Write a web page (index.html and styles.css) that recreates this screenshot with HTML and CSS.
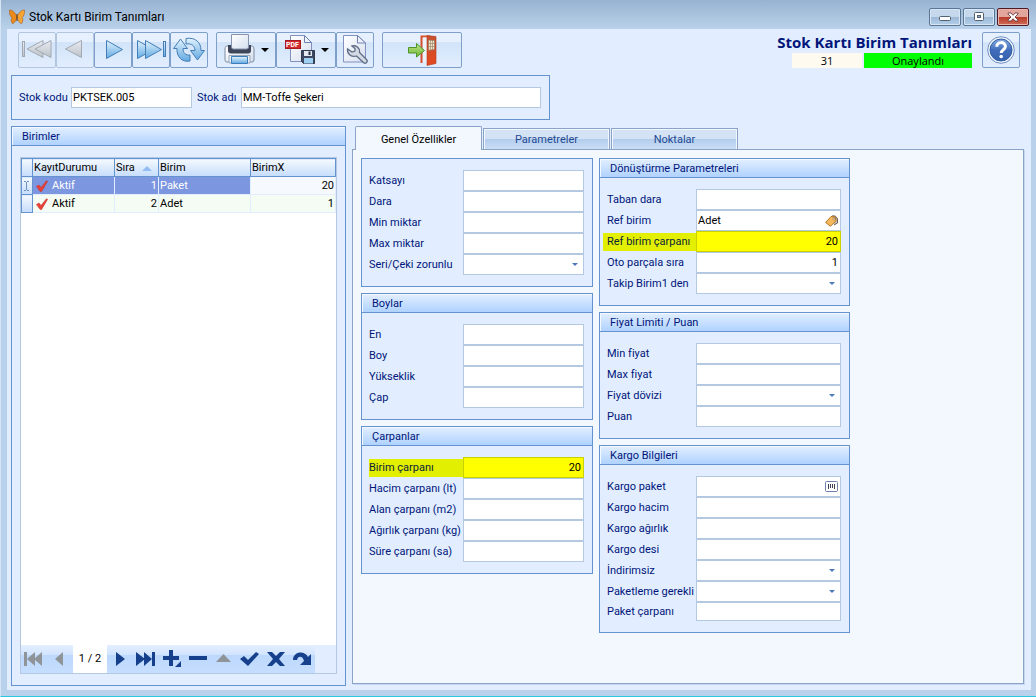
FILE: index.html
```html
<!DOCTYPE html>
<html lang="tr">
<head>
<meta charset="utf-8">
<title>Stok Kartı Birim Tanımları</title>
<link rel="stylesheet" href="styles.css">
</head>
<body>
<svg class="defs" width="0" height="0" aria-hidden="true">
  <defs>
    <linearGradient id="gBlue" x1="0" y1="0" x2="0" y2="1"><stop offset="0" stop-color="#e2f3fd"/><stop offset="1" stop-color="#62a9e2"/></linearGradient>
    <linearGradient id="gGray" x1="0" y1="0" x2="0" y2="1"><stop offset="0" stop-color="#e9edf2"/><stop offset="1" stop-color="#bcc1c8"/></linearGradient>
    <linearGradient id="gPaper" x1="0" y1="0" x2="1" y2="1"><stop offset="0" stop-color="#ffffff"/><stop offset="1" stop-color="#d5dfee"/></linearGradient>
    <linearGradient id="gDoor" x1="0" y1="0" x2="0" y2="1"><stop offset="0" stop-color="#c8502c"/><stop offset="1" stop-color="#e4481f"/></linearGradient>
    <linearGradient id="gHelp" x1="0" y1="0" x2="0" y2="1"><stop offset="0" stop-color="#8aaede"/><stop offset=".5" stop-color="#3f6dbb"/><stop offset="1" stop-color="#3562ae"/></linearGradient>
    <linearGradient id="gGreen" x1="0" y1="0" x2="0" y2="1"><stop offset="0" stop-color="#bfe584"/><stop offset="1" stop-color="#6cb539"/></linearGradient>
  </defs>
</svg>
<div class="window">
  <header class="titlebar">
    <svg class="app-icon" viewBox="0 0 16 16" aria-hidden="true">
      <path d="M7.600 7C5.400 2.400 2.600.6.4 1.200c-.2 3 .6 6 2.400 7.200C1.600 10 2 12.800 3.600 14.800 5.800 14 7.400 11 7.800 8.200z" fill="#ee8a1a" stroke="#8d531a" stroke-width=".5"/>
      <path d="M8.400 7C10.600 2.400 13.400.6 15.600 1.200c.2 3-.6 6-2.400 7.200 1.200 1.600.8 4.400-.8 6.400-2.200-.8-3.800-3.800-4.200-6.600z" fill="#f7a433" stroke="#8d531a" stroke-width=".5"/>
      <path d="M8 5v7" stroke="#5b3413"/>
    </svg>
    <span class="titlebar-text">Stok Kartı Birim Tanımları</span>
    <div class="win-buttons">
      <button class="win-btn" aria-label="Simge durumuna küçült"><svg width="12" height="10" viewBox="0 0 12 10"><rect x=".5" y="4.500" width="11" height="4" rx="1" fill="#fff" stroke="#53606f"/></svg></button>
      <button class="win-btn" aria-label="Ekranı kapla"><svg width="12" height="10" viewBox="0 0 12 10"><rect x="1.500" y=".5" width="9" height="8" rx="1" fill="#fff" stroke="#53606f"/><rect x="4.500" y="3.500" width="3" height="2" fill="#8fabc8" stroke="#53606f"/></svg></button>
      <button class="win-btn win-close" aria-label="Kapat"><svg width="12" height="10" viewBox="0 0 12 10"><path d="M1 1h3l2 2.300L8 1h3v1L8 5l3 3v1H8L6 6.700 4 9H1V8l3-3-3-3z" fill="#fff" stroke="#5c3034" stroke-width=".8"/></svg></button>
    </div>
  </header>

  <main class="client">
    <div class="toolbar">
      <div class="tool-group">
        <button class="tool" disabled aria-label="İlk"><svg viewBox="0 0 32 32"><g fill="url(#gGray)" stroke="#a3a9b2"><rect x="1.500" y="7.500" width="2" height="15"/><path d="M22 6.500v17L6 15z"/><path d="M30 6.500v17L14 15z"/></g></svg></button>
        <button class="tool" disabled aria-label="Önceki"><svg viewBox="0 0 32 32"><path d="M22.500 6.500v17L6.500 15z" fill="url(#gGray)" stroke="#a3a9b2"/></svg></button>
        <button class="tool" aria-label="Sonraki"><svg viewBox="0 0 32 32"><path d="M9.500 6.500v18l16-9z" fill="url(#gBlue)" stroke="#447db5"/></svg></button>
        <button class="tool" aria-label="Son"><svg viewBox="0 0 32 32"><g fill="url(#gBlue)" stroke="#447db5"><path d="M2.500 6.500v18l16-9z"/><path d="M10.500 6.500v18l16-9z"/><rect x="28.500" y="7.500" width="2" height="15"/></g></svg></button>
        <button class="tool" aria-label="Yenile"><svg viewBox="0 0 32 32"><g fill="url(#gBlue)" stroke="#447db5"><path d="M17 21v6C9 28.500 3.500 23 4 14.500H.5L7.500 5l7 9.500H10c0 4.500 2.500 7 7 6.500z"/><path d="M13 10V4.500C22 3 28 8 28 16.500h3.500l-7 9.500-7-9.500H22c0-4.500-3.500-7.500-9-6.500z"/></g></svg></button>
      </div>
      <div class="tool-group">
        <button class="tool tool-split" aria-label="Yazdır"><svg viewBox="0 0 32 32"><path d="M2.500 12q-1.500 1-1.500 3v11q0 2 2 2h25q2 0 2-2V15q0-2-1.500-3z" fill="url(#gPaper)" stroke="#7d8ba3"/><path d="M4 16.500q0 3 3 3h17q3 0 3-3V11H4z" fill="#3c4559"/><path d="M7.500.5h17V13q0 2-2 2h-13q-2 0-2-2z" fill="url(#gPaper)" stroke="#8793aa"/><path d="M5 21.500h21v7.500H5z" fill="#edf2f9" stroke="#9aa7bb"/><path d="M7.500 22.500h16v7h-16z" fill="url(#gBlue)" stroke="#3d7db9"/></svg><i class="drop"></i></button>
        <button class="tool tool-split" aria-label="PDF kaydet"><svg viewBox="0 0 32 32"><path d="M6.500 1.500h14l7 7v19h-21z" fill="url(#gPaper)" stroke="#8290bd"/><path d="M20.500 1.500v7h7z" fill="#eef3fb" stroke="#6f80b2"/><rect x="1.500" y="6.500" width="15" height="8" fill="#d22b2d" stroke="#a51b20"/><text class="pdf-mark" x="2" y="13">PDF</text><path d="M17.500 16.500h13v13h-11l-2-2z" fill="#3e4860" stroke="#303a50"/><rect x="20" y="17" width="8" height="5" fill="#e5eaf1"/><rect x="24.500" y="17.500" width="2" height="3.500" fill="#28324a"/><rect x="20" y="24" width="9" height="5.500" fill="#9fd0f2"/></svg><i class="drop"></i></button>
        <button class="tool" aria-label="Ayarlar"><svg viewBox="0 0 32 32"><path d="M4.500 1.500h14l8 7.500v19h-22z" fill="url(#gPaper)" stroke="#8290bd"/><path d="M18.500 1.500V9h8z" fill="#eef3fb" stroke="#6f80b2"/><path d="M13 12c4-1 8 1.500 7.500 6.500l7 7c2 2-1 5-3 3L17.500 22C12.500 23.500 8 20 8.500 15l4.500 3 3-1 0-2.500z" fill="#d3dae4" stroke="#5f6e86" stroke-width="1.300"/></svg></button>
      </div>
      <button class="tool tool-exit" aria-label="Çıkış"><svg viewBox="0 0 32 32"><path d="M15.500 29V2.500H24" fill="none" stroke="#d8512e" stroke-width="2"/><path d="M17 3.500h5v24h-5z" fill="#eef3fa"/><path d="M21 1.500l9 1v27l-9 2z" fill="url(#gDoor)" stroke="#ae3c20" stroke-width=".6"/><path d="M22.500 6l6 .6v9l-6 .6z" fill="#f6e6c0" stroke="#8d7b6a" stroke-width=".7"/><path d="M24.500 6v10M26.500 6v10M22.500 9.500h6M22.500 12.500h6" stroke="#8d7b6a" stroke-width=".6"/><path d="M2.500 13.500h8v-4l8 7-8 6.500v-4h-8z" fill="url(#gGreen)" stroke="#4c9428"/></svg></button>
      <div class="heading">
        <h1>Stok Kartı Birim Tanımları</h1>
        <div class="status"><span class="status-no">31</span><span class="status-ok">Onaylandı</span></div>
      </div>
      <button class="tool" aria-label="Yardım"><svg viewBox="0 0 32 32"><circle cx="16" cy="16" r="13.300" fill="#f4f8fd" stroke="#6d8dc0"/><circle cx="16" cy="16" r="11" fill="url(#gHelp)" stroke="#2f5ca6"/><path d="M11.800 12.800c0-5.600 8.600-5.400 8.600-.4 0 3-4.200 3.400-4.200 6.600" fill="none" stroke="#fff" stroke-width="3"/><circle cx="16.200" cy="22.500" r="1.800" fill="#fff"/></svg></button>
    </div>

    <section class="card-bar">
      <label for="kod">Stok kodu</label><input id="kod" class="text code" value="PKTSEK.005">
      <label for="adi">Stok adı</label><input id="adi" class="text name" value="MM-Toffe Şekeri">
    </section>

    <div class="body">
      <section class="group units">
        <h2>Birimler</h2>
        <div class="grid">
          <table>
            <colgroup><col class="c-ind"><col class="c-state"><col class="c-order"><col class="c-unit"><col></colgroup>
            <thead><tr><th></th><th>KayıtDurumu</th><th>Sıra<i class="sort"></i></th><th>Birim</th><th>BirimX</th></tr></thead>
            <tbody>
              <tr class="selected"><th><svg width="7" height="10" viewBox="0 0 7 10"><path d="M1 .5h2M4 .5h2M3.500 1v8M1 9.500h2M4 9.500h2" stroke="#6d92c8" fill="none"/></svg></th>
                <td><span class="state"><svg class="tick" viewBox="0 0 12 12"><path d="M.5 6.500L3 5l2 2.500L10.500.8l1 .6L5.500 11.500 4 11.300z" fill="#e8423a" stroke="#c8302b" stroke-width=".6"/></svg>Aktif</span></td><td class="num">1</td><td>Paket</td><td class="num focus">20</td></tr>
              <tr><th></th>
                <td><span class="state"><svg class="tick" viewBox="0 0 12 12"><path d="M.5 6.500L3 5l2 2.500L10.500.8l1 .6L5.500 11.500 4 11.300z" fill="#e8423a" stroke="#c8302b" stroke-width=".6"/></svg>Aktif</span></td><td class="num">2</td><td>Adet</td><td class="num">1</td></tr>
            </tbody>
          </table>
          <nav class="navigator">
            <button class="nav-btn" disabled aria-label="İlk kayıt"><svg viewBox="0 0 26 28"><path d="M3 7h3v14H3zM14 7v14L6 14zM21 7v14l-8-7z"/></svg></button>
            <button class="nav-btn" disabled aria-label="Önceki kayıt"><svg viewBox="0 0 26 28"><path d="M16 7v14l-8-7z"/></svg></button>
            <span class="nav-pos">1 / 2</span>
            <button class="nav-btn" aria-label="Sonraki kayıt"><svg viewBox="0 0 26 28"><path d="M9 7v14l9-7z"/></svg></button>
            <button class="nav-btn" aria-label="Son kayıt"><svg viewBox="0 0 26 28"><path d="M3 7v14l9-7zM11 7v14l8-7zM19 7h3v14h-3z"/></svg></button>
            <button class="nav-btn" aria-label="Ekle"><svg viewBox="0 0 26 28"><path d="M10 5h4v6h6v4h-6v6h-4v-6H4v-4h6zM22 16v6h-6z"/></svg></button>
            <button class="nav-btn" aria-label="Sil"><svg viewBox="0 0 26 28"><path d="M4 11h18v4H4z"/></svg></button>
            <button class="nav-btn" disabled aria-label="Düzenle"><svg viewBox="0 0 26 28"><path d="M5 17l7.500-8 7.500 8z"/></svg></button>
            <button class="nav-btn" aria-label="Kaydet"><svg viewBox="0 0 26 28"><path d="M3 14l4-3 4 4 8-8 3 2-11 12z"/></svg></button>
            <button class="nav-btn" aria-label="Vazgeç"><svg viewBox="0 0 26 28"><path d="M4 7h5l4 4 4-4h5l-6 7 6 7h-5l-4-4-4 4H4l6-7z"/></svg></button>
            <button class="nav-btn" aria-label="Yenile"><svg viewBox="0 0 26 28"><path d="M4 15c0-9 12-10 15-3l3-3v11H11l4-4c-1-5-6-6-7-1z"/></svg></button>
          </nav>
        </div>
      </section>

      <section class="pages">
        <div class="tabs" role="tablist">
          <button class="tab active" role="tab" aria-selected="true">Genel Özellikler</button>
          <button class="tab" role="tab">Parametreler</button>
          <button class="tab" role="tab">Noktalar</button>
        </div>
        <div class="page" role="tabpanel">
          <div class="column column-a">
            <section class="group">
              <div class="fields">
                <div class="row"><label for="a1">Katsayı</label><input id="a1" class="text"></div>
                <div class="row"><label for="a2">Dara</label><input id="a2" class="text"></div>
                <div class="row"><label for="a3">Min miktar</label><input id="a3" class="text"></div>
                <div class="row"><label for="a4">Max miktar</label><input id="a4" class="text"></div>
                <div class="row pick"><label for="a5">Seri/Çeki zorunlu</label><select id="a5" class="text"><option></option></select></div>
              </div>
            </section>
            <section class="group">
              <h2>Boylar</h2>
              <div class="fields">
                <div class="row"><label for="b1">En</label><input id="b1" class="text"></div>
                <div class="row"><label for="b2">Boy</label><input id="b2" class="text"></div>
                <div class="row"><label for="b3">Yükseklik</label><input id="b3" class="text"></div>
                <div class="row"><label for="b4">Çap</label><input id="b4" class="text"></div>
              </div>
            </section>
            <section class="group">
              <h2>Çarpanlar</h2>
              <div class="fields">
                <div class="row marked"><label for="c1">Birim çarpanı</label><input id="c1" class="text num" value="20"></div>
                <div class="row"><label for="c2">Hacim çarpanı (lt)</label><input id="c2" class="text"></div>
                <div class="row"><label for="c3">Alan çarpanı (m2)</label><input id="c3" class="text"></div>
                <div class="row"><label for="c4">Ağırlık çarpanı (kg)</label><input id="c4" class="text"></div>
                <div class="row"><label for="c5">Süre çarpanı (sa)</label><input id="c5" class="text"></div>
              </div>
            </section>
          </div>
          <div class="column column-b">
            <section class="group">
              <h2>Dönüştürme Parametreleri</h2>
              <div class="fields">
                <div class="row"><label for="d1">Taban dara</label><input id="d1" class="text"></div>
                <div class="row"><label for="d2">Ref birim</label><input id="d2" class="text" value="Adet"><button class="inner-btn" aria-label="Birim seç"><svg width="13" height="12" viewBox="0 0 13 12"><path d="M7 1q4-1 5.500 3v4L9 10" fill="#c9c4bd" stroke="#5c5148" stroke-width=".9"/><path d="M.6 7.500L6 1.500l4.500.7.5 3.600L5.500 11.300z" fill="#f5b95c" stroke="#a86a1c" stroke-width=".9"/><circle cx="9" cy="4" r="1" fill="#fff" stroke="#704b20" stroke-width=".5"/></svg></button></div>
                <div class="row marked"><label for="d3">Ref birim çarpanı</label><input id="d3" class="text num" value="20"></div>
                <div class="row"><label for="d4">Oto parçala sıra</label><input id="d4" class="text num" value="1"></div>
                <div class="row pick"><label for="d5">Takip Birim1 den</label><select id="d5" class="text"><option></option></select></div>
              </div>
            </section>
            <section class="group">
              <h2>Fiyat Limiti / Puan</h2>
              <div class="fields">
                <div class="row"><label for="e1">Min fiyat</label><input id="e1" class="text"></div>
                <div class="row"><label for="e2">Max fiyat</label><input id="e2" class="text"></div>
                <div class="row pick"><label for="e3">Fiyat dövizi</label><select id="e3" class="text"><option></option></select></div>
                <div class="row"><label for="e4">Puan</label><input id="e4" class="text"></div>
              </div>
            </section>
            <section class="group">
              <h2>Kargo Bilgileri</h2>
              <div class="fields">
                <div class="row"><label for="f1">Kargo paket</label><input id="f1" class="text"><button class="inner-btn" aria-label="Barkod"><svg width="13" height="11" viewBox="0 0 13 11"><rect x=".5" y=".5" width="12" height="10" rx="1" fill="#fff" stroke="#6e7fae"/><path d="M3.500 3v5M5.500 3v4M7.500 3v4M9.500 3v5" stroke="#3c4250"/></svg></button></div>
                <div class="row"><label for="f2">Kargo hacim</label><input id="f2" class="text"></div>
                <div class="row"><label for="f3">Kargo ağırlık</label><input id="f3" class="text"></div>
                <div class="row"><label for="f4">Kargo desi</label><input id="f4" class="text"></div>
                <div class="row pick"><label for="f5">İndirimsiz</label><select id="f5" class="text"><option></option></select></div>
                <div class="row pick"><label for="f6">Paketleme gerekli</label><select id="f6" class="text"><option></option></select></div>
                <div class="row short"><label for="f7">Paket çarpanı</label><input id="f7" class="text"></div>
              </div>
            </section>
          </div>
        </div>
      </section>
    </div>
  </main>
</div>
</body>
</html>
```
FILE: styles.css
```css
* { box-sizing: border-box; }

body {
  margin: 0;
  font: 11px/14px Roboto, "Noto Sans", sans-serif;
  color: #000;
}

button, input, select { font: inherit; color: inherit; margin: 0; }
svg { display: block; }
.defs { position: absolute; }

.window {
  display: flex;
  flex-direction: column;
  min-height: 100vh;
  padding: 0 5px 6px 6px;
  background: #b9d1ea;
  border-left: 1px solid #d6e5f5;
  border-bottom: 1px solid #2cc8e0;
}

/* Title bar */
.titlebar {
  display: flex;
  align-items: center;
  height: 29px;
  margin: 0 -5px 0 -6px;
  padding: 5px 7px 0 8px;
  background: linear-gradient(#98b3d1, #b9d1ea);
}
.app-icon { width: 16px; height: 16px; }
.titlebar-text { margin-left: 4px; font-size: 12px; line-height: 16px; }
.win-buttons { display: flex; gap: 2px; margin-left: auto; }
.win-btn {
  display: flex;
  align-items: center;
  justify-content: center;
  width: 32px;
  height: 18px;
  padding: 0;
  border: 1px solid #5b7595;
  border-radius: 2px;
  background: linear-gradient(#c5d8ec 48%, #9bb8d6 50%, #b5cfe9);
  box-shadow: inset 0 0 0 1px #d8e6f5;
}
.win-close {
  border-color: #4d1a26;
  background: linear-gradient(#e2a69c 48%, #b93a28 50%, #cf6b58);
  box-shadow: inset 0 0 0 1px #eab5aa;
}

/* Client area */
.client {
  flex: 1;
  display: flex;
  flex-direction: column;
  padding: 3px 5px 4px 4px;
  background: #e2eeff;
}

.toolbar { display: flex; gap: 8px; padding: 0 6px 0 7px; height: 36px; }
.tool-group { display: flex; }
.tool {
  display: flex;
  align-items: center;
  justify-content: center;
  width: 38px;
  height: 36px;
  padding: 0;
  border: 1px solid #7e9fca;
  border-radius: 2px;
  background: linear-gradient(#e6f0ff 0 26%, #d2e4f9 28%, #e2eeff);
}
.tool:disabled { border-color: #b3c6e0; }
.tool svg { width: 32px; height: 32px; }
.tool-split { width: 60px; gap: 5px; }
.tool-exit { width: 80px; }
.drop { border: 4px solid transparent; border-top-color: #000; border-bottom: 0; }
.pdf-mark { font: bold 7px Roboto, sans-serif; fill: #fff; }

.heading { margin-left: auto; margin-right: 2px; text-align: right; }
.heading h1 { margin: 0; font: bold 15px/21px "Open Sans", sans-serif; color: #00157a; }
.status {
  display: flex;
  gap: 2px;
  justify-content: flex-end;
  text-align: center;
  font: 11px/15px "Open Sans", sans-serif;
}
.status-no { width: 70px; background: #fffaf0; }
.status-ok { width: 108px; background: #0f0; }

.text {
  display: block;
  width: 100%;
  min-width: 0;
  height: 21px;
  padding: 0 2px 0 1px;
  border: 1px solid #b4c8e2;
  border-radius: 0;
  background: #fff;
  outline: 0;
  appearance: none;
}
.num { text-align: right; }
label { color: #00157a; white-space: nowrap; }

.card-bar {
  display: flex;
  align-items: center;
  align-self: flex-start;
  width: 539px;
  height: 45px;
  margin-top: 7px;
  padding: 0 8px 0 7px;
  border: 1px solid #6593cf;
}
.card-bar label:first-child { width: 52px; }
.card-bar label { width: 44px; }
.card-bar .code { width: 121px; margin-right: 5px; }
.card-bar .name { flex: 1; }

.body { flex: 1; display: flex; gap: 6px; margin-top: 6px; }

/* Group boxes */
.group { border: 1px solid #6593cf; background: #e2eeff; }
.group h2 {
  height: 19px;
  margin: 0;
  padding: 3px 10px 1px;
  font: inherit;
  color: #00157a;
  background: linear-gradient(#e3efff, #afd2ff);
  border-bottom: 1px solid #6593cf;
  box-shadow: inset 1px 1px 0 #f4f9ff;
}

/* Unit list */
.units { flex: 0 0 335px; display: flex; flex-direction: column; }
.grid {
  flex: 1;
  display: flex;
  flex-direction: column;
  margin: 11px 8px;
  border: 1px solid #b4c8e2;
  background: #fff;
}
table { width: 100%; table-layout: fixed; border-collapse: collapse; }
.c-ind { width: 11px; }
.c-state { width: 82px; }
.c-order { width: 44px; }
.c-unit { width: 92px; }
th, td { height: 18px; padding: 1px 1px 0; line-height: 14px; font-weight: normal; text-align: left; }
th { border: 1px solid #6593cf; background: linear-gradient(#f4f9ff, #c5dcfb); }
td { border: 1px solid #e2eeff; background: #f5fcf3; }
td.num { text-align: right; }
.sort { float: right; margin: 5px 5px 0 0; border: 5px solid transparent; border-top: 0; border-bottom-color: #93bdf2; }
.selected td { background: #7c96df; color: #fff; }
.selected td.focus { background: #f6faff; color: #000; }
.state { display: flex; align-items: center; gap: 4px; padding-left: 2px; }
.tick { width: 12px; height: 12px; }

.navigator {
  display: flex;
  height: 28px;
  margin-top: auto;
  padding-right: 20px;
  background: #e2eeff;
}
.nav-btn {
  flex: 0 0 26px;
  padding: 0;
  border: 0;
  background: linear-gradient(#e3efff, #d2e4ff 34%, #bcd8fc 36%, #c6deff);
}
.nav-btn svg { width: 26px; height: 28px; fill: #163f8c; }
.nav-btn:disabled svg { fill: #8f9499; }
.nav-pos { flex: 0 0 34px; line-height: 28px; text-align: center; background: #fff; }

/* Tabbed pages */
.pages { flex: 1; display: flex; flex-direction: column; padding: 0 2px 2px 0; }
.tabs { display: flex; align-items: flex-end; gap: 1px; padding-left: 3px; height: 24px; }
.tab {
  width: 127px;
  height: 21px;
  padding: 2px 0 0;
  margin-bottom: 1px;
  border: 1px solid #8ba3c7;
  border-bottom: 0;
  color: #1e4a94;
  background: linear-gradient(#d3e2f5 48%, #b3cdec 52%, #cbddf5);
  box-shadow: inset 1px 1px 0 #f2f7fe, inset -1px 0 0 #f2f7fe;
}
.tab.active {
  z-index: 1;
  height: 24px;
  margin-bottom: 0;
  border-radius: 2px 2px 0 0;
  color: #000;
  background: #f3f8ff;
  box-shadow: none;
}
.page {
  flex: 1;
  display: flex;
  align-items: flex-start;
  gap: 6px;
  margin-top: -1px;
  padding: 8px;
  border: 1px solid #8ba3c7;
  background: #f3f8ff;
  box-shadow: 1px 1px 0 #c5d8f0;
}
.column { display: flex; flex-direction: column; gap: 6px; }
.column-a { flex: 0 0 232px; }
.column-b { flex: 0 0 251px; }

.fields { padding: 11px 8px 11px 7px; }
.row { position: relative; display: grid; grid-template-columns: 94px 1fr; align-items: center; }
.column-b .row { grid-template-columns: 89px 1fr; }
.short .text { height: 19px; }
.marked label { padding: 2px 0; color: #0a1f3c; background: #e3ef00; }
.column-b .marked label { margin-left: -4px; padding: 2px 0 2px 4px; }
.marked .text { background: #ff0; border-color: #c9d200; }

.pick::after {
  content: "";
  position: absolute;
  right: 6px;
  top: 9px;
  border: 3px solid transparent;
  border-top-color: #4a78b8;
  border-bottom: 0;
  pointer-events: none;
}
.inner-btn {
  position: absolute;
  right: 3px;
  top: 5px;
  padding: 0;
  border: 0;
  background: none;
}
```
